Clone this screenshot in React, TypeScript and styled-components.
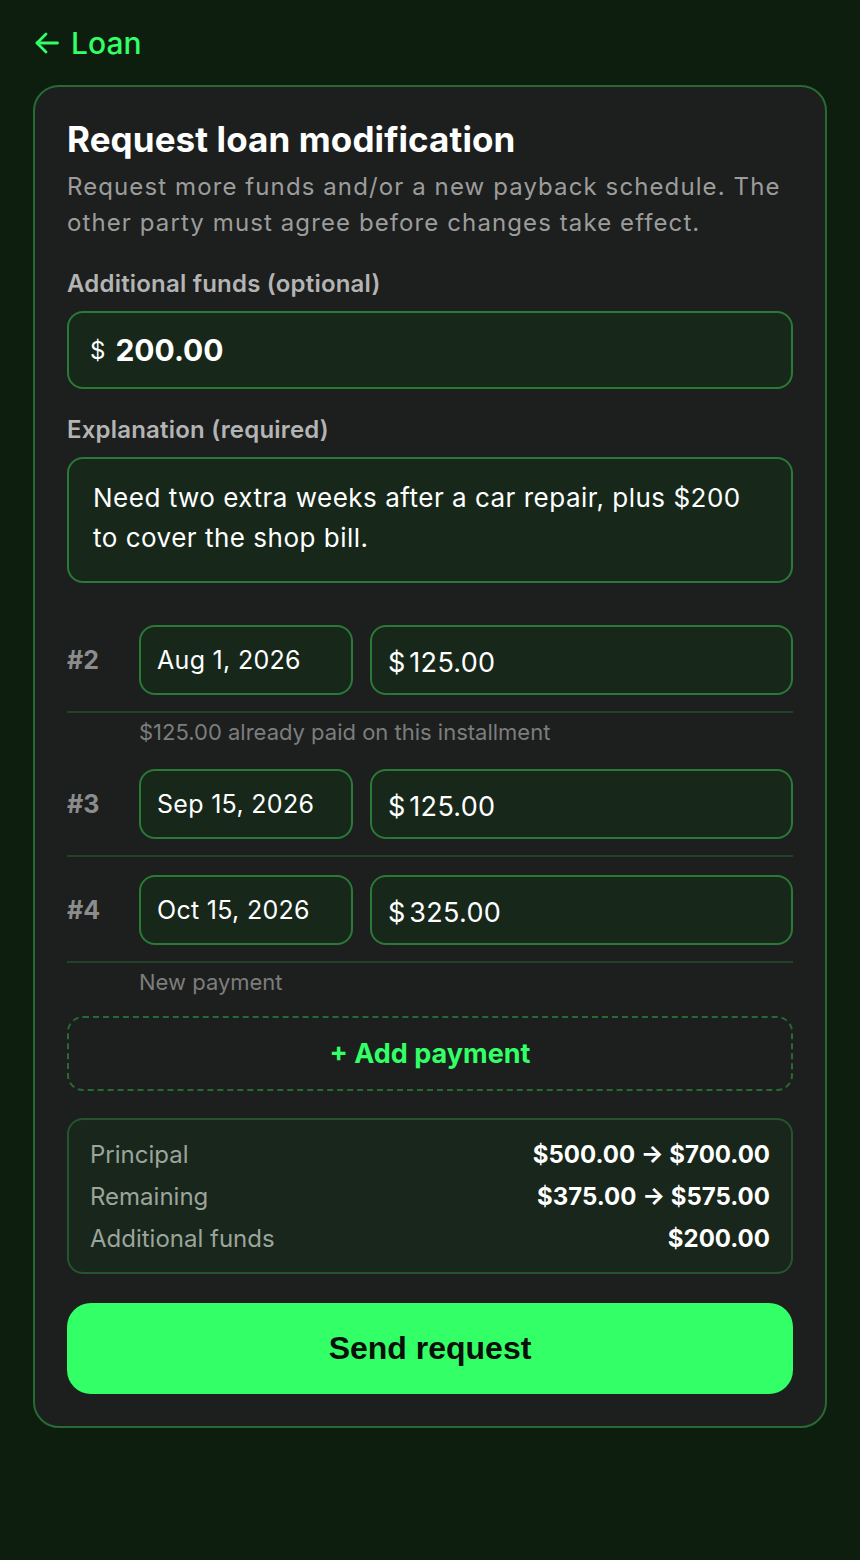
import React from "react";
import styled, { createGlobalStyle } from "styled-components";

const GlobalStyle = createGlobalStyle`
    html, body {
        margin: 0;
        padding: 0;
        background: #0d1e0f;
    }
    body {
        font-family: Inter, "Noto Sans", sans-serif;
        color: #ffffff;
    }
    * {
        box-sizing: border-box;
    }
`;

const Page = styled.div`
    min-height: 1560px;
    padding: 24px 33px 40px 33px;
    display: flex;
    flex-direction: column;
`;

const BackLink = styled.a`
    display: inline-flex;
    align-items: center;
    gap: 12px;
    align-self: flex-start;
    height: 38px;
    padding-left: 2px;
    color: #33ff66;
    font-size: 30px;
    font-weight: 500;
    text-decoration: none;
    margin-bottom: 23px;
    cursor: pointer;
    svg {
        width: 24px;
        height: 22px;
    }
`;

const Card = styled.section`
    background: #1c1f1d;
    border: 2px solid #276b33;
    border-radius: 26px;
    padding: 32px;
    display: flex;
    flex-direction: column;
`;

const Title = styled.h1`
    margin: 0;
    font-size: 35px;
    line-height: 40px;
    font-weight: 700;
    color: #ffffff;
    letter-spacing: 0.1px;
`;

const Subtitle = styled.p`
    margin: 10px 0 2px 0;
    font-size: 24px;
    line-height: 36px;
    letter-spacing: 1.1px;
    color: #9c9c9c;
`;

const Label = styled.label`
    display: block;
    margin: 27px 0 13px 0;
    font-size: 24px;
    line-height: 28px;
    font-weight: 600;
    letter-spacing: 0.2px;
    color: #b4b4b4;
`;

const Field = styled.div<{ $height: number; $pad: number }>`
    display: flex;
    align-items: center;
    min-width: 0;
    height: ${p => p.$height}px;
    background: #17281b;
    border: 2px solid #2a7a36;
    border-radius: 16px;
    padding: 0 ${p => p.$pad}px;
`;

const AmountField = styled(Field)`
    padding-top: 5px;
`;

const Currency = styled.span<{ $size: number; $gap: number }>`
    font-size: ${p => p.$size}px;
    color: #ffffff;
    margin-right: ${p => p.$gap}px;
`;

const BareInput = styled.input<{ $size: number; $bold?: boolean }>`
    flex: 1;
    width: 100%;
    min-width: 0;
    background: transparent;
    border: none;
    outline: none;
    padding: 0;
    font-family: inherit;
    font-size: ${p => p.$size}px;
    font-weight: ${p => p.$bold ? 700 : 400};
    letter-spacing: ${p => p.$bold ? 0 : 0.3}px;
    color: #ffffff;
`;

const TextArea = styled.textarea`
    display: block;
    width: 100%;
    height: 126px;
    resize: none;
    background: #17281b;
    border: 2px solid #2a7a36;
    border-radius: 16px;
    padding: 19px 24px;
    font-family: inherit;
    font-size: 26px;
    line-height: 40px;
    letter-spacing: 0.5px;
    color: #ffffff;
    outline: none;
`;

const Schedule = styled.div`
    margin-top: 42px;
    display: flex;
    flex-direction: column;
    gap: 18px;
`;

const Installment = styled.div`
    display: flex;
    flex-direction: column;
`;

const InstallmentRow = styled.div`
    display: grid;
    grid-template-columns: 55px 214px minmax(0, 1fr);
    column-gap: 17px;
    align-items: center;
    padding-bottom: 16px;
    border-bottom: 2px solid #21412a;
`;

const Index = styled.span`
    font-size: 25px;
    font-weight: 700;
    color: #8c8c8c;
`;

const Note = styled.div`
    padding: 7px 0 7px 72px;
    font-size: 22px;
    line-height: 24px;
    color: #7d7d7d;
`;

const AddButton = styled.button`
    margin-top: -3px;
    height: 75px;
    width: 100%;
    background: transparent;
    border: 2px dashed #276b33;
    border-radius: 16px;
    color: #33ff66;
    font-family: Inter, sans-serif;
    font-size: 27px;
    font-weight: 700;
    cursor: pointer;
`;

const Summary = styled.div`
    margin-top: 27px;
    background: #18261b;
    border: 2px solid #24552c;
    border-radius: 16px;
    padding: 13px 21px;
    display: flex;
    flex-direction: column;
`;

const SummaryRow = styled.div`
    display: flex;
    justify-content: space-between;
    align-items: center;
    height: 42px;
    font-size: 24px;
`;

const SummaryLabel = styled.span`
    color: #9ba59c;
`;

const SummaryValue = styled.span`
    color: #ffffff;
    font-weight: 700;
`;

const SendButton = styled.button`
    margin-top: 29px;
    height: 91px;
    width: 100%;
    background: #33ff66;
    border: none;
    border-radius: 24px;
    color: #0a0f0b;
    font-family: "Liberation Sans", Arial, sans-serif;
    font-size: 32px;
    font-weight: 700;
    cursor: pointer;
`;

interface IInstallment {
    index: number;
    date: string;
    amount: string;
    note?: string;
}

const installments: IInstallment[] = [
    { index: 2, date: "Aug 1, 2026", amount: "125.00", note: "$125.00 already paid on this installment" },
    { index: 3, date: "Sep 15, 2026", amount: "125.00" },
    { index: 4, date: "Oct 15, 2026", amount: "325.00", note: "New payment" },
];

const summary = [
    { label: "Principal", value: "$500.00 → $700.00" },
    { label: "Remaining", value: "$375.00 → $575.00" },
    { label: "Additional funds", value: "$200.00" },
];

const BackArrow = () => (
    <svg viewBox="0 0 24 22" fill="none" stroke="currentColor" strokeWidth={2.8} strokeLinecap="round" strokeLinejoin="round">
        <path d="M22.5 11H2" />
        <path d="M11 2L2 11l9 9" />
    </svg>
);

export default function App() {
    return (
        <>
            <GlobalStyle />
            <Page>
                <BackLink>
                    <BackArrow />
                    Loan
                </BackLink>
                <Card>
                    <Title>Request loan modification</Title>
                    <Subtitle>
                        Request more funds and/or a new payback schedule. The other party must agree before changes take effect.
                    </Subtitle>

                    <Label>Additional funds (optional)</Label>
                    <Field $height={78} $pad={21}>
                        <Currency $size={24} $gap={10}>$</Currency>
                        <BareInput $size={30} $bold defaultValue="200.00" />
                    </Field>

                    <Label>Explanation (required)</Label>
                    <TextArea defaultValue="Need two extra weeks after a car repair, plus $200 to cover the shop bill." />

                    <Schedule>
                        {installments.map(item => (
                            <Installment key={item.index}>
                                <InstallmentRow>
                                    <Index>#{item.index}</Index>
                                    <Field $height={70} $pad={16}>
                                        <BareInput $size={25} defaultValue={item.date} />
                                    </Field>
                                    <AmountField $height={70} $pad={16}>
                                        <Currency $size={27} $gap={4}>$</Currency>
                                        <BareInput $size={27} defaultValue={item.amount} />
                                    </AmountField>
                                </InstallmentRow>
                                {item.note && <Note>{item.note}</Note>}
                            </Installment>
                        ))}
                        <AddButton>+ Add payment</AddButton>
                    </Schedule>

                    <Summary>
                        {summary.map(row => (
                            <SummaryRow key={row.label}>
                                <SummaryLabel>{row.label}</SummaryLabel>
                                <SummaryValue>{row.value}</SummaryValue>
                            </SummaryRow>
                        ))}
                    </Summary>

                    <SendButton>Send request</SendButton>
                </Card>
            </Page>
        </>
    );
}
